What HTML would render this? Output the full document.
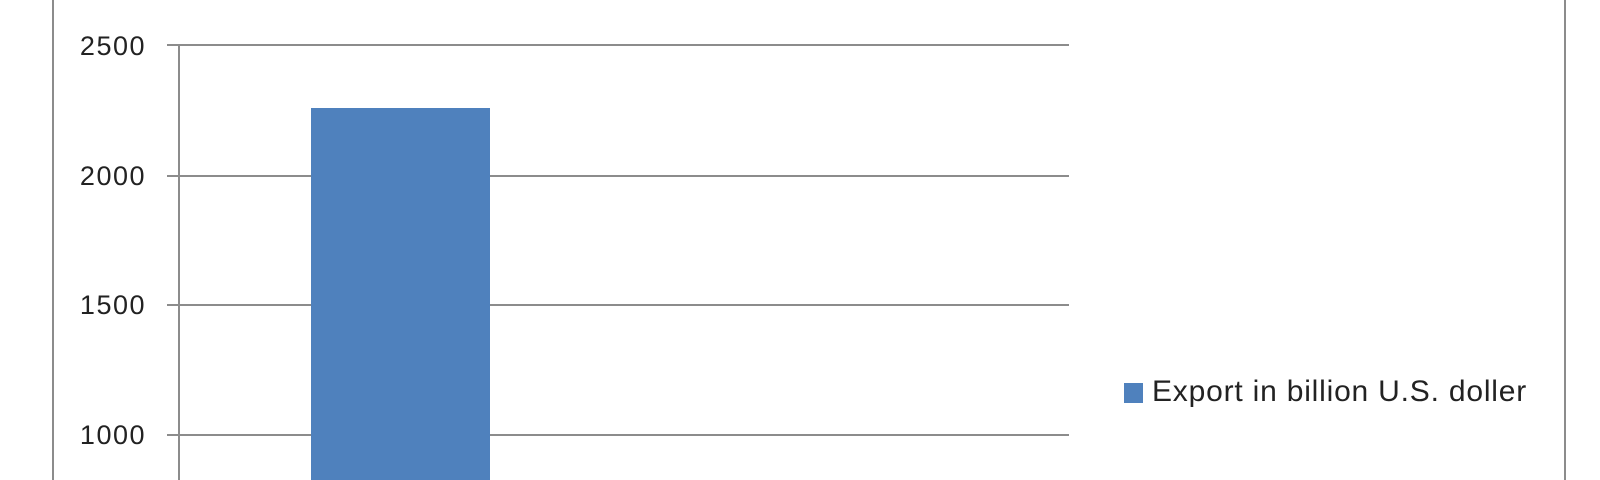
<!DOCTYPE html>
<html><head><style>
html,body{margin:0;padding:0;background:#fff;width:1600px;height:480px;overflow:hidden;position:relative;font-family:"Liberation Sans",sans-serif;}
.a{position:absolute}
.g{position:absolute;left:167px;width:902px;height:2px;background:#8c8c8c}
.l{position:absolute;width:146px;left:0;text-align:right;font-size:27px;letter-spacing:1.5px;color:#222;line-height:28px}
</style></head><body>
<div class="a" style="left:52px;top:0;width:2px;height:480px;background:#8c8c8c"></div>
<div class="a" style="left:1564px;top:0;width:2px;height:480px;background:#8c8c8c"></div>
<div class="g" style="top:44px"></div>
<div class="g" style="top:175px"></div>
<div class="g" style="top:304px"></div>
<div class="g" style="top:434px"></div>
<div class="a" style="left:178px;top:44px;width:2px;height:436px;background:#8c8c8c"></div>
<div class="l" style="top:32px">2500</div>
<div class="l" style="top:162px">2000</div>
<div class="l" style="top:291px">1500</div>
<div class="l" style="top:421px">1000</div>
<div class="a" style="left:311px;top:108px;width:179px;height:372px;background:#4f81bd"></div>
<div class="a" style="left:1124px;top:383px;width:19px;height:20px;background:#4f81bd"></div>
<div class="a" style="left:1152px;top:377px;font-size:30px;letter-spacing:0.8px;color:#222;line-height:30px;white-space:nowrap">Export in billion U.S. doller</div>
</body></html>
